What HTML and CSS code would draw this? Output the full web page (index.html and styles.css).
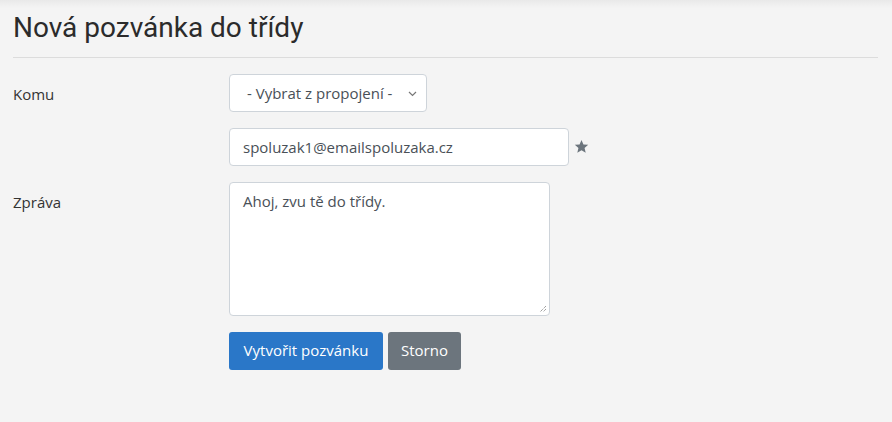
FILE: index.html
```html
<!DOCTYPE html>
<html lang="cs">
<head>
<meta charset="utf-8">
<link rel="stylesheet" href="styles.css">
</head>
<body>
<div class="page">
  <h1 class="title">Nová pozvánka do třídy</h1>
  <hr class="rule">
  <form class="form">
    <div class="row">
      <label class="label">Komu</label>
      <div class="field">
        <div class="select">
          <span>- Vybrat z propojení -</span>
          <svg class="chev" width="9" height="6" viewBox="0 0 9 6"><path d="M1 1l3.5 3.5L8 1" fill="none" stroke="#777" stroke-width="1.2"/></svg>
        </div>
      </div>
    </div>
    <div class="row">
      <div class="label"></div>
      <div class="field inline">
        <div class="input email">spoluzak1@emailspoluzaka.cz</div>
        <svg class="star" width="15" height="15" viewBox="0 0 24 24"><path d="M12 1.5l3.1 7.1 7.6.7-5.8 5 1.8 7.5L12 17.8l-6.7 4 1.8-7.5-5.8-5 7.6-.7z" fill="#6c757d"/></svg>
      </div>
    </div>
    <div class="row">
      <label class="label">Zpráva</label>
      <div class="field">
        <div class="input textarea">Ahoj, zvu tě do třídy.
          <svg class="grip" width="8" height="8" viewBox="0 0 8 8"><path d="M7 1L1 7M7 4L4 7" stroke="#777" stroke-width="1" stroke-dasharray="1 1"/></svg>
        </div>
      </div>
    </div>
    <div class="row">
      <div class="label"></div>
      <div class="field buttons">
        <span class="btn primary">Vytvořit pozvánku</span>
        <span class="btn secondary">Storno</span>
      </div>
    </div>
  </form>
</div>
</body>
</html>
```

FILE: styles.css
```css
html, body {
  margin: 0;
  padding: 0;
}
body {
  background: #f4f4f4;
  font-family: "Open Sans", "Noto Sans", sans-serif;
  font-size: 15px;
  color: #333;
  width: 892px;
  height: 422px;
  overflow: hidden;
  background-image: linear-gradient(#e9e9e9, #f4f4f4 8px);
  background-repeat: no-repeat;
}
.page {
  padding: 0 14px 0 13px;
}
.title {
  font-family: Roboto, sans-serif;
  font-weight: 400;
  font-size: 28px;
  line-height: 33px;
  margin: 0;
  padding-top: 11px;
  color: #2b2b2b;
}
.rule {
  border: 0;
  border-top: 1px solid #dcdcdc;
  margin: 13px 0 0 0;
  height: 0;
}
.form {
  display: flex;
  flex-direction: column;
  gap: 16px;
  padding-top: 16px;
}
.row {
  display: flex;
}
.label {
  width: 216px;
  flex: none;
  padding-top: 11px;
  line-height: 18px;
  color: #333;
}
.field {
  flex: 1;
}
.inline {
  display: flex;
  align-items: center;
  gap: 5px;
}
.select {
  width: 198px;
  height: 38px;
  box-sizing: border-box;
  border: 1px solid #ced4da;
  border-radius: 4px;
  background: #fff;
  display: flex;
  align-items: center;
  padding: 0 9px 0 17px;
  color: #495057;
  justify-content: space-between;
}
.chev {
  margin-top: 1px;
}
.input {
  box-sizing: border-box;
  border: 1px solid #ced4da;
  border-radius: 4px;
  background: #fff;
  color: #495057;
  padding: 0 13px;
}
.email {
  width: 340px;
  height: 38px;
  line-height: 36px;
}
.star {
  margin-top: -2px;
}
.textarea {
  width: 321px;
  height: 134px;
  padding-top: 7px;
  line-height: 22px;
  position: relative;
}
.grip {
  position: absolute;
  right: 2px;
  bottom: 2px;
}
.buttons {
  display: flex;
  gap: 5px;
}
.btn {
  display: inline-block;
  height: 38px;
  box-sizing: border-box;
  line-height: 37px;
  border-radius: 3px;
  color: #fff;
  font-size: 15px;
  text-align: center;
}
.primary {
  background: #2a77c8;
  width: 154px;
}
.secondary {
  background: #6c757d;
  width: 73px;
}
```
